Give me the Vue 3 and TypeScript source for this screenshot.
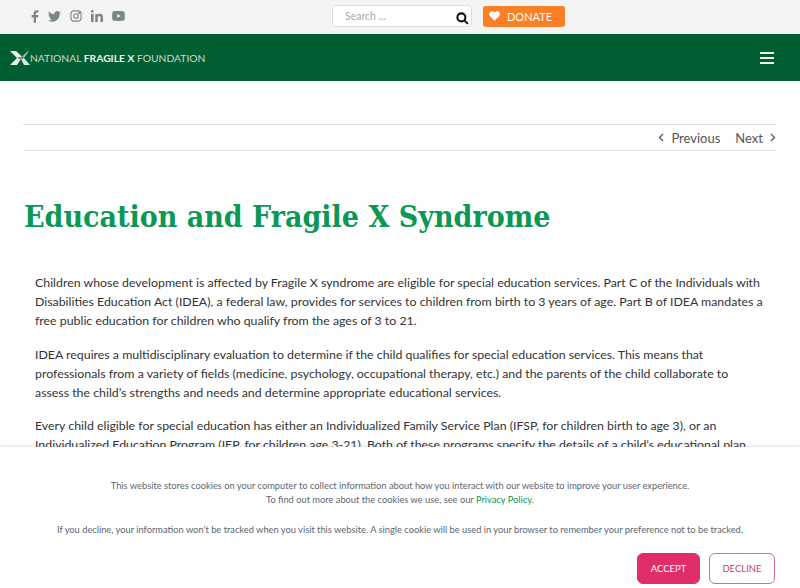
<script setup lang="ts">
const paragraphs: string[][] = [
  ['Children whose development is affected by Fragile X syndrome are eligible for special education services. Part C of the Individuals with', 'Disabilities Education Act (IDEA), a federal law, provides for services to children from birth to 3 years of age. Part B of IDEA mandates a', 'free public education for children who qualify from the ages of 3 to 21.'],
  ['IDEA requires a multidisciplinary evaluation to determine if the child qualifies for special education services. This means that', 'professionals from a variety of fields (medicine, psychology, occupational therapy, etc.) and the parents of the child collaborate to', 'assess the child’s strengths and needs and determine appropriate educational services.'],
  ['Every child eligible for special education has either an Individualized Family Service Plan (IFSP, for children birth to age 3), or an', 'Individualized Education Program (IEP, for children age 3-21). Both of these programs specify the details of a child’s educational plan,', 'including the services the child will receive and the goals for the child’s progress.'],
]
</script>

<template>
  <div class="page">
    <header class="topbar">
      <div class="social">
        <svg width="8" height="13" viewBox="0 0 9 14"><path d="M3 14V8H.7V5.4H3V3.6C3 1.3 4.300 0 6.400 0c.9 0 1.700.1 2 .1v2.400H7c-1.100 0-1.400.6-1.400 1.400v1.500h2.700L7.900 8H5.600v6z" /></svg>
        <svg width="13" height="11" viewBox="0 0 24 20"><path d="M24 2.400c-.9.400-1.800.7-2.800.8 1-.6 1.800-1.600 2.200-2.700-1 .6-2 1-3.100 1.200A4.900 4.900 0 0 0 11.900 6.200C7.800 6 4.200 4 1.700.9c-1.300 2.200-.7 5.100 1.500 6.600-.8 0-1.600-.2-2.200-.6 0 2.300 1.600 4.400 3.900 4.900-.7.200-1.500.2-2.200.1.600 2 2.400 3.400 4.600 3.400A9.900 9.900 0 0 1 0 17.400 14 14 0 0 0 21.500 5c1-.7 1.800-1.600 2.500-2.600z" /></svg>
        <svg width="12" height="12" viewBox="0 0 13 13" class="insta"><rect x="1" y="1" width="11" height="11" rx="3" /><circle cx="6.500" cy="6.500" r="2.500" /><circle cx="9.800" cy="3.200" r=".5" /></svg>
        <svg width="12" height="12" viewBox="0 0 13 13"><rect x="0" y="4.200" width="2.800" height="8.800" /><circle cx="1.400" cy="1.500" r="1.500" /><path d="M4.600 4.200h2.600v1.200c.5-.8 1.400-1.400 2.600-1.400 2.500 0 3.200 1.600 3.200 4V13h-2.700V8.500c0-1.200-.3-2.100-1.400-2.100-1.200 0-1.600.9-1.600 2.100V13H4.600z" /></svg>
        <svg width="13" height="10" viewBox="0 0 14 11"><path fill-rule="evenodd" d="M2.300.2C4.500 0 9.500 0 11.700.2c1.200.1 2 .8 2.100 2 .2 1.800.2 4.800 0 6.600-.1 1.200-.9 1.900-2.100 2-2.200.2-7.200.2-9.400 0-1.200-.1-2-.8-2.100-2C0 7 0 4 .2 2.200.3 1 1.100.3 2.300.2zM5.600 3.300v4.400l3.800-2.200z" /></svg>
      </div>
      <div class="search">
        <span class="placeholder">Search ...</span>
        <svg width="13" height="13" viewBox="0 0 14 14"><circle cx="5.800" cy="5.800" r="4.300" /><path d="M9 9l3.800 3.800" /></svg>
      </div>
      <a class="donate">
        <svg width="11" height="10" viewBox="0 0 24 22"><path d="M12 21.500 2.200 11.600C-.7 8.600-.4 4 2.600 1.700 5.300-.4 9 .1 11 2.300l1 1.100 1-1.100c2-2.200 5.700-2.700 8.400-.6 3 2.300 3.300 6.900.4 9.900z" /></svg>
        DONATE
      </a>
    </header>

    <nav class="mainbar">
      <div class="logo">
        <svg width="20" height="14" viewBox="0 0 20 14">
          <path d="M0 0h6l6 5.500L7 7z" fill="#e8f0ec" />
          <path d="M0 14l7-7 4 1-4 6z" fill="#e8f0ec" />
          <path d="M12 5.500 18 0h1l-5 7z" fill="#8fc9b0" />
          <path d="M11 8l3-1 6 7h-6z" fill="#d9ebe3" />
          <path d="M9 6h3l1 2-3 1z" fill="#c96a8f" />
        </svg>
        <span class="wordmark">NATIONAL <b>FRAGILE X</b> FOUNDATION</span>
      </div>
      <div class="burger"><i></i><i></i><i></i></div>
    </nav>

    <main class="content">
      <div class="pager">
        <a class="prev">
          <svg width="6" height="9" viewBox="0 0 6 9"><path d="M5 1 1.500 4.500 5 8" /></svg>
          Previous
        </a>
        <a class="next">
          Next
          <svg width="6" height="9" viewBox="0 0 6 9"><path d="M1 1l3.500 3.500L1 8" /></svg>
        </a>
      </div>
      <h1>Education and Fragile X Syndrome</h1>
      <div class="body">
        <p v-for="(lines, i) in paragraphs" :key="i">
          <span v-for="(line, j) in lines" :key="j" class="line">{{ line }}</span>
        </p>
      </div>
    </main>

    <aside class="cookie">
      <p class="cookie-text">This website stores cookies on your computer to collect information about how you interact with our website to improve your user experience.<br />To find out more about the cookies we use, see our <a>Privacy Policy</a>.</p>
      <p class="cookie-text second">If you decline, your information won’t be tracked when you visit this website. A single cookie will be used in your browser to remember your preference not to be tracked.</p>
      <div class="actions">
        <button class="accept">ACCEPT</button>
        <button class="decline">DECLINE</button>
      </div>
    </aside>
  </div>
</template>

<style>
html, body { margin: 0; padding: 0; }
</style>

<style scoped>
.page {
  position: relative;
  width: 800px;
  height: 588px;
  overflow: hidden;
  background: #fff;
  font-family: Lato, "Liberation Sans", sans-serif;
  color: #333;
}
.topbar {
  box-sizing: border-box;
  height: 34px;
  background: #f4f4f4;
  display: flex;
  align-items: center;
  padding: 0 0 2px 31px;
}
.social {
  display: flex;
  align-items: center;
  gap: 9px;
  width: 301px;
  fill: #7b8686;
}
.insta { fill: none; stroke: #7b8686; stroke-width: 1.200; }
.search {
  box-sizing: border-box;
  width: 140px;
  height: 22px;
  background: #fff;
  border: 1px solid #ddd;
  border-radius: 4px;
  display: flex;
  align-items: center;
  justify-content: space-between;
  padding: 0 2px 0 12px;
}
.placeholder { font-size: 10.500px; color: #a8a8a8; }
.search svg { fill: none; stroke: #111; stroke-width: 2.200; margin-top: 4px; }
.donate {
  box-sizing: border-box;
  width: 82px;
  height: 21px;
  margin-left: 11px;
  background: #fb7f25;
  border-radius: 3px;
  color: #fff;
  font-size: 11px;
  display: flex;
  align-items: center;
  gap: 7px;
  padding-left: 6px;
}
.donate svg { fill: #fff; }
.mainbar {
  box-sizing: border-box;
  height: 47px;
  background: #005e30;
  display: flex;
  align-items: center;
  justify-content: space-between;
  padding: 0 26px 0 10px;
}
.logo { display: flex; align-items: center; }
.wordmark {
  font-size: 10.300px;
  font-weight: 400;
  color: #c9dcd2;
}
.wordmark b { font-weight: 700; color: #eef4f0; }
.burger { display: flex; flex-direction: column; gap: 3px; }
.burger i { display: block; width: 14px; height: 2px; background: #eef4f0; }
.content { padding: 43px 24px 0 23px; }
.pager {
  box-sizing: border-box;
  height: 27px;
  border-top: 1px solid #e2e2e2;
  border-bottom: 1px solid #e2e2e2;
  display: flex;
  justify-content: flex-end;
  align-items: center;
  gap: 15px;
  font-size: 13px;
  color: #555;
}
.prev, .next { display: flex; align-items: center; gap: 7px; }
.pager svg { fill: none; stroke: #555; stroke-width: 1.300; }
h1 {
  margin: 47px 0 0 1px;
  height: 38px;
  font-family: "DejaVu Serif Condensed", "DejaVu Serif", serif;
  font-size: 30px;
  line-height: 38px;
  font-weight: 700;
  color: #0a9854;
  white-space: nowrap;
}
.body { margin: 37px 0 0 12px; font-size: 12.350px; line-height: 19px; color: #333; }
.body p { margin: 0 0 14.500px; }
.line { display: block; white-space: nowrap; }
.cookie {
  position: absolute;
  left: 0;
  right: 0;
  bottom: 0;
  height: 141px;
  box-sizing: border-box;
  background: #fff;
  box-shadow: 0 -1px 3px rgba(80, 90, 110, .18);
  padding-top: 32px;
}
.cookie-text {
  margin: 0;
  text-align: center;
  font-size: 9.300px;
  line-height: 14px;
  color: #5d6670;
}
.cookie-text a { color: #0a9854; }
.second { margin-top: 16px; }
.actions {
  position: absolute;
  right: 25px;
  bottom: 4px;
  display: flex;
  gap: 9px;
}
button {
  box-sizing: border-box;
  height: 31px;
  border-radius: 6px;
  font-family: inherit;
  font-size: 9.500px;
  padding: 0;
}
.accept { width: 63px; background: #df2e69; border: 1px solid #df2e69; color: #fff; }
.decline { width: 66px; background: #fff; border: 1px solid #cf6f90; color: #c23f70; }
</style>
